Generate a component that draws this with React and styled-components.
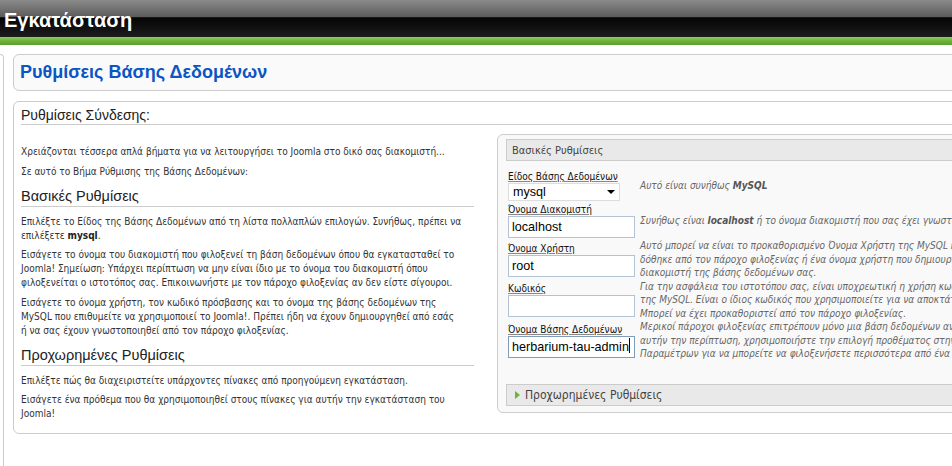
import React from 'react';
import styled, { createGlobalStyle } from 'styled-components';

const BODY_FONT = '"DejaVu Sans Condensed", "DejaVu Sans", Tahoma, sans-serif';
const HEAD_FONT = '"Liberation Sans", Arial, sans-serif';

const GlobalStyle = createGlobalStyle`
  html, body {
    margin: 0;
    padding: 0;
    height: 100%;
    overflow: hidden;
    background: #fff;
  }
  body {
    font-family: ${BODY_FONT};
    font-size: 10px;
    color: #333;
  }
`;

const Page = styled.div`
  width: 1200px;
  height: 466px;
  display: flex;
  flex-direction: column;
`;

const Header = styled.div`
  height: 37px;
  background: linear-gradient(#8a8a8a 0%, #5c5c5c 45%, #3a3a3a 46%, #050505 48%, #111 75%, #1d1d1d 100%);
  display: flex;
  align-items: center;
  padding: 2px 0 0 4px;
  box-sizing: border-box;
`;

const HeaderTitle = styled.h1`
  margin: 0;
  font-family: ${HEAD_FONT};
  font-size: 20px;
  font-weight: bold;
  color: #fff;
  line-height: 1;
`;

const GreenBar = styled.div`
  height: 8px;
  background: linear-gradient(#8ccf5a, #6cb23d 50%, #5c9f30);
`;

const Body = styled.div`
  flex: 1;
  display: flex;
  padding-top: 9px;
  min-height: 0;
`;

const Sidebar = styled.div`
  width: 3px;
  margin-right: 9px;
  border: 1px solid #ccc;
  border-left: none;
  border-radius: 0 6px 6px 0;
  margin-bottom: -6px;
`;

const Content = styled.div`
  flex: 1;
  display: flex;
  flex-direction: column;
  gap: 10px;
`;

const TitleBox = styled.div`
  height: 37px;
  box-sizing: border-box;
  border: 1px solid #ccc;
  border-radius: 6px;
  background: #fafafa;
  display: flex;
  align-items: center;
  padding-left: 6px;
`;

const Title = styled.h2`
  margin: 0;
  font-family: ${HEAD_FONT};
  font-size: 18px;
  font-weight: bold;
  color: #0b55c4;
`;

const MainBox = styled.div`
  border: 1px solid #ccc;
  border-radius: 6px;
  padding: 4px 7px 0;
  background: #fff;
`;

const BoxHeading = styled.h3`
  margin: 0;
  font-family: ${HEAD_FONT};
  font-size: 14px;
  font-weight: normal;
  color: #222;
  line-height: 18px;
  border-bottom: 1px solid #ccc;
`;

const Columns = styled.div`
  display: flex;
  align-items: flex-start;
  gap: 23px;
  margin-top: 9px;
`;

const LeftCol = styled.div`
  width: 453px;
  padding: 11px 0 12px;
`;

const Para = styled.p`
  margin: 0 0 5.5px;
  line-height: 14px;
  white-space: nowrap;
  &:last-child {
    margin-bottom: 0;
  }
  b {
    color: #222;
  }
`;

const SectionHeading = styled.h4`
  margin: 8px 0;
  font-family: ${HEAD_FONT};
  font-size: 14.5px;
  font-weight: normal;
  color: #222;
  line-height: 18px;
  padding-bottom: 1px;
  border-bottom: 1px solid #ccc;
`;

const Panel = styled.div`
  flex: 1;
  border: 1px solid #ccc;
  border-radius: 6px;
  background: #f9f9f9;
  padding: 4px 0 6px 8px;
`;

const PanelBar = styled.div`
  height: 22px;
  box-sizing: border-box;
  border: 1px solid #ccc;
  border-right: none;
  background: #e9e9e9;
  display: flex;
  align-items: center;
  gap: 5px;
  padding-left: ${(p) => (p.$toggle ? '8px' : '5px')};
  font-size: ${(p) => (p.$toggle ? '12px' : '11px')};
  color: #444;
`;

const Arrow = styled.span`
  width: 0;
  height: 0;
  border-top: 4px solid transparent;
  border-bottom: 4px solid transparent;
  border-left: 5px solid #6cb23d;
`;

const FormGrid = styled.div`
  display: grid;
  grid-template-columns: 132px 1fr;
  align-items: center;
  margin: 8px 0 23px 2px;
`;

const FieldCell = styled.div`
  position: relative;
  display: flex;
  flex-direction: column;
  align-items: flex-start;
  padding: 1px 0;
`;

const Label = styled.label`
  font-size: 10px;
  line-height: 13px;
  color: #111;
  text-decoration: underline;
  text-decoration-color: #888;
`;

const TextInput = styled.input`
  width: 127px;
  height: 22px;
  box-sizing: border-box;
  border: 1px solid ${(p) => (p.$focus ? '#7f9db9' : '#b4c3d3')};
  background: #fff;
  font-family: ${HEAD_FONT};
  font-size: 12.6px;
  color: #000;
  padding: 0 1px 0 3px;
  outline: none;
`;

const TextCursor = styled.span`
  position: absolute;
  left: 121px;
  bottom: 6px;
  width: 1px;
  height: 15px;
  background: #000;
`;

const SelectBox = styled.div`
  width: 112px;
  height: 18px;
  box-sizing: border-box;
  border: 1px solid #ddd;
  background: #fff;
  display: flex;
  align-items: center;
  justify-content: space-between;
  padding: 0 4px;
  font-family: ${HEAD_FONT};
  font-size: 12.6px;
  color: #000;
`;

const Caret = styled.span`
  width: 0;
  height: 0;
  border-left: 4px solid transparent;
  border-right: 4px solid transparent;
  border-top: 4px solid #000;
`;

const Help = styled.div`
  font-style: italic;
  color: #666;
  line-height: 13.5px;
  white-space: nowrap;
  b {
    color: #555;
  }
`;

const lines = (arr) =>
  arr.map((l, i) => (
    <React.Fragment key={i}>
      {l}
      {i < arr.length - 1 && <br />}
    </React.Fragment>
  ));

export default function App() {
  return (
    <Page>
      <GlobalStyle />
      <Header>
        <HeaderTitle>Εγκατάσταση</HeaderTitle>
      </Header>
      <GreenBar />
      <Body>
        <Sidebar />
        <Content>
          <TitleBox>
            <Title>Ρυθμίσεις Βάσης Δεδομένων</Title>
          </TitleBox>
          <MainBox>
            <BoxHeading>Ρυθμίσεις Σύνδεσης:</BoxHeading>
            <Columns>
              <LeftCol>
                <Para>Χρειάζονται τέσσερα απλά βήματα για να λειτουργήσει το Joomla στο δικό σας διακομιστή...</Para>
                <Para>Σε αυτό το Βήμα Ρύθμισης της Βάσης Δεδομένων:</Para>
                <SectionHeading>Βασικές Ρυθμίσεις</SectionHeading>
                <Para>
                  Επιλέξτε το Είδος της Βάσης Δεδομένων από τη λίστα πολλαπλών επιλογών. Συνήθως, πρέπει να
                  <br />
                  επιλέξετε <b>mysql</b>.
                </Para>
                <Para>
                  {lines([
                    'Εισάγετε το όνομα του διακομιστή που φιλοξενεί τη βάση δεδομένων όπου θα εγκατασταθεί το',
                    'Joomla! Σημείωση: Υπάρχει περίπτωση να μην είναι ίδιο με το όνομα του διακομιστή όπου',
                    'φιλοξενείται ο ιστοτόπος σας. Επικοινωνήστε με τον πάροχο φιλοξενίας αν δεν είστε σίγουροι.',
                  ])}
                </Para>
                <Para>
                  {lines([
                    'Εισάγετε το όνομα χρήστη, τον κωδικό πρόσβασης και το όνομα της βάσης δεδομένων της',
                    'MySQL που επιθυμείτε να χρησιμοποιεί το Joomla!. Πρέπει ήδη να έχουν δημιουργηθεί από εσάς',
                    'ή να σας έχουν γνωστοποιηθεί από τον πάροχο φιλοξενίας.',
                  ])}
                </Para>
                <SectionHeading>Προχωρημένες Ρυθμίσεις</SectionHeading>
                <Para>Επιλέξτε πώς θα διαχειριστείτε υπάρχοντες πίνακες από προηγούμενη εγκατάσταση.</Para>
                <Para>
                  {lines(['Εισάγετε ένα πρόθεμα που θα χρησιμοποιηθεί στους πίνακες για αυτήν την εγκατάσταση του', 'Joomla!'])}
                </Para>
              </LeftCol>
              <Panel>
                <PanelBar>Βασικές Ρυθμίσεις</PanelBar>
                <FormGrid>
                  <FieldCell>
                    <Label>Είδος Βάσης Δεδομένων</Label>
                    <SelectBox>
                      mysql
                      <Caret />
                    </SelectBox>
                  </FieldCell>
                  <Help>
                    Αυτό είναι συνήθως <b>MySQL</b>
                  </Help>

                  <FieldCell>
                    <Label>Όνομα Διακομιστή</Label>
                    <TextInput defaultValue="localhost" />
                  </FieldCell>
                  <Help>
                    Συνήθως είναι <b>localhost</b> ή το όνομα διακομιστή που σας έχει γνωστοποιήσει ο πάροχος φιλοξενίας.
                  </Help>

                  <FieldCell>
                    <Label>Όνομα Χρήστη</Label>
                    <TextInput defaultValue="root" />
                  </FieldCell>
                  <Help>
                    {lines([
                      'Αυτό μπορεί να είναι το προκαθορισμένο Όνομα Χρήστη της MySQL root, ένα όνομα χρήστη που σας',
                      'δόθηκε από τον πάροχο φιλοξενίας ή ένα όνομα χρήστη που δημιουργήσατε κατά τη ρύθμιση του',
                      'διακομιστή της βάσης δεδομένων σας.',
                    ])}
                  </Help>

                  <FieldCell>
                    <Label>Κωδικός</Label>
                    <TextInput type="password" />
                  </FieldCell>
                  <Help>
                    {lines([
                      'Για την ασφάλεια του ιστοτόπου σας, είναι υποχρεωτική η χρήση κωδικού πρόσβασης για το λογαριασμό',
                      'της MySQL. Είναι ο ίδιος κωδικός που χρησιμοποιείτε για να αποκτάτε πρόσβαση στη βάση δεδομένων σας.',
                      'Μπορεί να έχει προκαθοριστεί από τον πάροχο φιλοξενίας.',
                    ])}
                  </Help>

                  <FieldCell>
                    <Label>Όνομα Βάσης Δεδομένων</Label>
                    <TextInput $focus defaultValue="herbarium-tau-admin" />
                    <TextCursor />
                  </FieldCell>
                  <Help>
                    {lines([
                      'Μερικοί πάροχοι φιλοξενίας επιτρέπουν μόνο μια βάση δεδομένων ανά ιστοτόπο. Σε',
                      'αυτήν την περίπτωση, χρησιμοποιήστε την επιλογή προθέματος στην ενότητα Προχωρημένων',
                      'Παραμέτρων για να μπορείτε να φιλοξενήσετε περισσότερα από ένα ιστοτόπους Joomla.',
                    ])}
                  </Help>
                </FormGrid>
                <PanelBar $toggle>
                  <Arrow />
                  Προχωρημένες Ρυθμίσεις
                </PanelBar>
              </Panel>
            </Columns>
          </MainBox>
        </Content>
      </Body>
    </Page>
  );
}
